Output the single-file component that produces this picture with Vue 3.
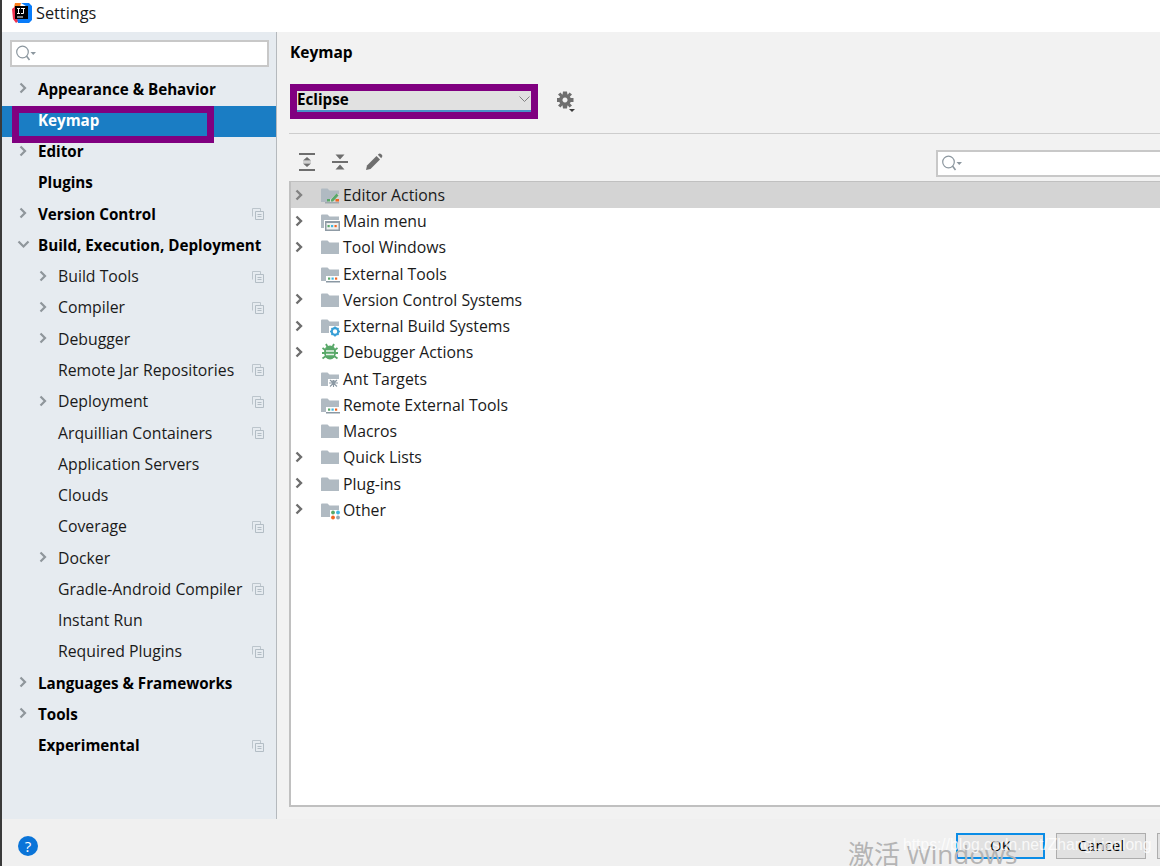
<script setup>
const side = [
  { t: 'Appearance & Behavior', b: 1, a: 1 },
  { t: 'Keymap', b: 1, sel: 1 },
  { t: 'Editor', b: 1, a: 1 },
  { t: 'Plugins', b: 1 },
  { t: 'Version Control', b: 1, a: 1, c: 1 },
  { t: 'Build, Execution, Deployment', b: 1, a: 2 },
  { t: 'Build Tools', a: 1, c: 1, sub: 1 },
  { t: 'Compiler', a: 1, c: 1, sub: 1 },
  { t: 'Debugger', a: 1, sub: 1 },
  { t: 'Remote Jar Repositories', c: 1, sub: 1 },
  { t: 'Deployment', a: 1, c: 1, sub: 1 },
  { t: 'Arquillian Containers', c: 1, sub: 1 },
  { t: 'Application Servers', sub: 1 },
  { t: 'Clouds', sub: 1 },
  { t: 'Coverage', c: 1, sub: 1 },
  { t: 'Docker', a: 1, sub: 1 },
  { t: 'Gradle-Android Compiler', c: 1, sub: 1 },
  { t: 'Instant Run', sub: 1 },
  { t: 'Required Plugins', c: 1, sub: 1 },
  { t: 'Languages & Frameworks', b: 1, a: 1 },
  { t: 'Tools', b: 1, a: 1 },
  { t: 'Experimental', b: 1, c: 1 }
]
const tree = [
  { t: 'Editor Actions', a: 1, k: 'edit', hi: 1 },
  { t: 'Main menu', a: 1, k: 'menu' },
  { t: 'Tool Windows', a: 1, k: 'plain' },
  { t: 'External Tools', k: 'ext' },
  { t: 'Version Control Systems', a: 1, k: 'plain' },
  { t: 'External Build Systems', a: 1, k: 'build' },
  { t: 'Debugger Actions', a: 1, k: 'bug' },
  { t: 'Ant Targets', k: 'ant' },
  { t: 'Remote External Tools', k: 'ext' },
  { t: 'Macros', k: 'plain' },
  { t: 'Quick Lists', a: 1, k: 'plain' },
  { t: 'Plug-ins', a: 1, k: 'plain' },
  { t: 'Other', a: 1, k: 'other' }
]
const folder = 'M0 3.500 Q0 2.500 1 2.500 H6.500 L8.500 4.500 H18 V16 H0 Z'
</script>

<template>
  <div class="root">
    <header class="title">
      <svg class="logo" width="20" height="20" viewBox="0 0 20 20">
        <path d="M3 0 H9 L8 4 L1 9 Z" fill="#fc801d" />
        <path d="M0 6 L4 3 L8 17 L4 20 L1 16 Z" fill="#f0334f" />
        <path d="M9 0 H17 L20 3 V17 L17 20 H6 L5 15 L14 3 Z" fill="#087cfa" />
        <rect x="3" y="3" width="13" height="13" fill="#000" />
        <rect x="5" y="13.500" width="6" height="1" fill="#fff" />
        <path d="M5 5 H8 V6 H7 V10 H8 V11 H5 V10 H6 V6 H5 Z M9 5 H13 V6 H12 V10 Q12 11 11 11 H9 V10 H11 V6 H9 Z" fill="#fff" />
      </svg>
      <span class="title-text">Settings</span>
    </header>
    <div class="main">
      <aside class="sidebar">
        <div class="search side-search">
          <svg width="22" height="17" viewBox="0 0 22 17" class="search-ic">
            <circle cx="6.500" cy="7" r="5.800" fill="none" stroke="#8c979f" stroke-width="1.200" />
            <path d="M10.500 11 L13.500 15" stroke="#8c979f" stroke-width="1.600" />
            <path d="M14.500 7 H20 L17.250 10 Z" fill="#8c979f" />
          </svg>
        </div>
        <nav class="nav">
          <div
            v-for="s in side"
            :key="s.t"
            class="nav-row"
            :class="{ bold: s.b, sel: s.sel, sub: s.sub }"
          >
            <svg v-if="s.a === 1" class="arrow" width="9" height="13" viewBox="0 0 9 13">
              <path d="M1.500 1.500 L6 6 L1.500 10.500" fill="none" stroke="#8f969b" stroke-width="2.200" />
            </svg>
            <svg v-if="s.a === 2" class="arrow down" width="13" height="9" viewBox="0 0 13 9">
              <path d="M1.500 1.500 L6.500 6.500 L11.500 1.500" fill="none" stroke="#8f969b" stroke-width="2.200" />
            </svg>
            <span class="nav-text">{{ s.t }}</span>
            <svg v-if="s.c" class="copy" width="12" height="12" viewBox="0 0 12 12">
              <path d="M.5 8.500 V.5 H8.500 V3" fill="none" stroke="#bcc5cc" />
              <path d="M3.500 3.500 H11.500 V11.500 H3.500 Z" fill="none" stroke="#b3bdc5" />
              <path d="M5.500 6.500 H9.500 M5.500 8.500 H9.500" stroke="#b3bdc5" />
            </svg>
          </div>
        </nav>
        <div class="mark mark-nav"></div>
      </aside>
      <section class="panel">
        <h1 class="heading">Keymap</h1>
        <div class="keymap-row">
          <div class="combo-frame">
            <div class="combo">
              <span>Eclipse</span>
              <svg width="11" height="7" viewBox="0 0 11 7">
                <path d="M.5 .5 L5.500 5.500 L10.500 .5" fill="none" stroke="#808080" />
              </svg>
            </div>
          </div>
          <svg class="gear" width="20" height="22" viewBox="0 0 20 22">
            <g fill="#6e6e6e">
              <path fill-rule="evenodd" d="M8 3 A6 6 0 1 0 8.010 3 Z M8 6.500 A2.500 2.500 0 1 1 7.990 6.500 Z" />
              <path d="M6 .5 H10 L10.500 4 H5.500 Z M6 17.500 H10 L10.500 14 H5.500 Z M-.5 7 H3 V11 H-.5 Z M13 7 H16.500 V11 H13 Z" />
              <path d="M1 3.500 L3.500 1.500 L5.500 4 L3.500 6 Z M15 3.500 L12.500 1.500 L10.500 4 L12.500 6 Z M1 14.500 L3.500 16.500 L5.500 14 L3.500 12 Z M15 14.500 L12.500 16.500 L10.500 14 L12.500 12 Z" />
            </g>
            <path d="M12 18 H18 L15 21 Z" fill="#3c3c3c" />
          </svg>
        </div>
        <div class="sep"></div>
        <div class="toolbar">
          <svg class="tool" width="16" height="18" viewBox="0 0 16 18">
            <path d="M0 1 H16 M0 17 H16" stroke="#6e6e6e" stroke-width="2" />
            <path d="M8 4 L12 7.500 H4 Z M8 14 L12 10.500 H4 Z" fill="#6e6e6e" />
            <path d="M4 9 H12" stroke="#b0b0b0" />
          </svg>
          <svg class="tool" width="16" height="18" viewBox="0 0 16 18">
            <path d="M0 9 H16" stroke="#6e6e6e" stroke-width="2" />
            <path d="M8 6.500 L3.500 1.500 H12.500 Z M8 11.500 L3.500 16.500 H12.500 Z" fill="#6e6e6e" />
          </svg>
          <svg class="tool" width="18" height="18" viewBox="0 0 18 18">
            <path d="M1 17 L2 12.500 L11.500 3 L15 6.500 L5.500 16 Z" fill="#6e6e6e" />
            <path d="M12.800 1.800 L14 .8 Q15 .2 16 1 L17 2 Q17.800 3 17 4 L16.200 5.200 Z" fill="#6e6e6e" />
          </svg>
          <div class="search tool-search">
            <svg width="22" height="17" viewBox="0 0 22 17" class="search-ic">
              <circle cx="6.500" cy="7" r="5.800" fill="none" stroke="#8c979f" stroke-width="1.200" />
              <path d="M10.500 11 L13.500 15" stroke="#8c979f" stroke-width="1.600" />
              <path d="M14.500 7 H20 L17.250 10 Z" fill="#8c979f" />
            </svg>
          </div>
        </div>
        <div class="tree">
          <div v-for="r in tree" :key="r.t" class="tree-row" :class="{ hi: r.hi }">
            <span class="tree-arrow">
              <svg v-if="r.a" width="9" height="13" viewBox="0 0 9 13">
                <path d="M1.500 1.500 L6 6 L1.500 10.500" fill="none" :stroke="r.hi ? '#828282' : '#6e6e6e'" stroke-width="2.400" />
              </svg>
            </span>
            <svg class="node" width="20" height="18" viewBox="0 0 20 18">
              <path v-if="r.k !== 'bug'" :d="folder" fill="#b0bac2" />
              <template v-if="r.k === 'edit'">
                <path d="M6 16 H19 V8 H15 Z" fill="#d4d4d4" />
                <rect x="4" y="16" width="14" height="1.500" fill="#a0a8ae" />
                <rect x="6" y="13" width="3" height="2.500" fill="#59a869" />
                <path d="M10 13.500 L15.500 7.500 L17.500 9.500 L12 15.500 H10 Z" fill="#59a869" />
                <rect x="14.500" y="13" width="3.500" height="2.500" fill="#f26522" />
              </template>
              <template v-if="r.k === 'menu'">
                <rect x="3" y="8" width="17" height="11.500" fill="#fff" />
                <rect x="4" y="9" width="15" height="10" fill="#8f9ba5" />
                <rect x="5.500" y="11" width="12" height="6.500" fill="#f0f0f0" />
                <rect x="6.500" y="13" width="2.200" height="2.200" fill="#59a869" />
                <rect x="10" y="13" width="2.200" height="2.200" fill="#40b6e0" />
                <rect x="13.500" y="13" width="2.200" height="2.200" fill="#f26522" />
              </template>
              <template v-if="r.k === 'ext'">
                <rect x="5" y="11" width="15" height="7" fill="#fff" />
                <rect x="7" y="12.500" width="2.200" height="2.200" fill="#59a869" />
                <rect x="10.500" y="12.500" width="2.200" height="2.200" fill="#40b6e0" />
                <rect x="14" y="12.500" width="2.200" height="2.200" fill="#f26522" />
                <rect x="5" y="16" width="14" height="1.500" fill="#8a98a3" />
              </template>
              <template v-if="r.k === 'build'">
                <rect x="8" y="9" width="12" height="11" fill="#fff" />
                <circle cx="14" cy="14.500" r="3.300" fill="none" stroke="#389fd6" stroke-width="2.200" />
                <path d="M14 9.500 V11.500 M14 17.500 V19.500 M9 14.500 H11 M17 14.500 H19 M10.500 11 L12 12.500 M17.500 11 L16 12.500 M10.500 18 L12 16.500 M17.500 18 L16 16.500" stroke="#389fd6" stroke-width="1.600" />
              </template>
              <template v-if="r.k === 'bug'">
                <ellipse cx="9" cy="9.500" rx="6" ry="7" fill="#59a869" />
                <path d="M1.500 5 L5 7.500 M16.500 5 L13 7.500 M1 10 H4 M17 10 H14 M1.500 15.500 L5 13 M16.500 15.500 L13 13 M5 1 L6.500 4 M13 1 L11.500 4" stroke="#59a869" stroke-width="1.800" />
                <path d="M5 8 H13 M5 11.500 H13" stroke="#e8f2ea" stroke-width="1.300" />
              </template>
              <template v-if="r.k === 'ant'">
                <rect x="7" y="9" width="13" height="10" fill="#fff" />
                <path d="M9 10 L16 16.500 M16 10 L9 16.500 M12.500 10 V17 M8 13 H17 M10 11 H15" stroke="#8a98a3" stroke-width="1.100" />
              </template>
              <template v-if="r.k === 'other'">
                <rect x="9" y="9" width="11" height="10" fill="#fff" />
                <circle cx="12" cy="11.500" r="1.900" fill="#59a869" />
                <circle cx="17" cy="11.500" r="1.900" fill="#40b6e0" />
                <circle cx="12" cy="16.500" r="1.900" fill="#f26522" />
                <circle cx="17" cy="16.500" r="1.900" fill="#9aa7b0" />
              </template>
            </svg>
            <span class="tree-text">{{ r.t }}</span>
          </div>
        </div>
      </section>
    </div>
    <footer class="footer">
      <div class="help">?</div>
      <div class="buttons">
        <div class="btn ok">OK</div>
        <div class="btn">Cancel</div>
        <div class="btn cut"></div>
      </div>
      <span class="activate">激活 Windows</span>
      <span class="url">https://blog.csdn.net/ZhangLianlong</span>
    </footer>
  </div>
</template>

<style>
html, body { margin: 0; background: #f2f2f2; }
</style>

<style scoped>
.root {
  width: 1160px;
  height: 866px;
  position: relative;
  overflow: hidden;
  display: flex;
  flex-direction: column;
  font-family: "Open Sans", "Noto Sans", "Noto Sans CJK SC", sans-serif;
  font-size: 15.8px;
  color: #000;
  background: #f2f2f2;
  border-left: 2px solid #3a3a3a;
  box-sizing: border-box;
}
.title {
  height: 32px;
  flex: none;
  background: #fff;
  display: flex;
  align-items: center;
  padding: 0 0 6px 10px;
  box-sizing: border-box;
  gap: 4px;
}
.title-text { font-size: 16.3px; color: #1a1a1a; }
.main { height: 787px; flex: none; display: flex; }
.sidebar {
  width: 275px;
  flex: none;
  position: relative;
  background: #e6ebf0;
  border-right: 1px solid #b5b9bd;
  box-sizing: border-box;
  padding-top: 8px;
}
.search {
  background: #fff;
  border: 2px solid #c8c8c8;
  box-sizing: border-box;
  display: flex;
  align-items: center;
}
.side-search { width: 259px; height: 27px; margin-left: 8px; padding-left: 4px; }
.nav { margin-top: 6px; }
.nav-row {
  height: 31.27px;
  display: flex;
  align-items: center;
  padding-left: 36px;
  position: relative;
  font-weight: 400;
  color: #1a1a1a;
}
.nav-row.sub { padding-left: 56px; }
.nav-row.bold { font-weight: 700; color: #000; font-size: 15.2px; }
.nav-row.sel {
  background: linear-gradient(transparent 1.8px, #1a7dc4 1.8px);
  box-shadow: 0 1px 0 #1a7dc4;
  color: #fff;
  box-sizing: border-box;
  z-index: 1;
}
.arrow { position: absolute; left: 17px; top: 9px; }
.arrow.down { left: 15px; top: 11px; }
.nav-row.sub .arrow { left: 37px; }
.copy { position: absolute; right: 12px; top: 10px; }
.mark-nav {
  position: absolute;
  left: 10px;
  top: 74px;
  width: 202px;
  height: 37px;
  border: 7px solid #800080;
  box-sizing: border-box;
  z-index: 2;
}
.panel { flex: 1; min-width: 0; padding: 0 0 12px 12px; display: flex; flex-direction: column; box-sizing: border-box; }
.heading { margin: 10px 0 0 1px; font-size: 15.5px; font-weight: 700; height: 21px; line-height: 21px; }
.keymap-row { display: flex; align-items: center; margin: 21px 0 0 1px; }
.combo-frame { width: 248px; height: 35px; border: 7px solid #800080; box-sizing: border-box; }
.combo {
  height: 100%;
  background: #e1e1e1;
  border-bottom: 2px solid #4a90c8;
  box-sizing: border-box;
  display: flex;
  align-items: center;
  justify-content: space-between;
  font-weight: 700;
  font-size: 15.2px;
  padding: 0 1px 3px 0;
}
.gear { margin-left: 19px; }
.sep { height: 1px; background: #cdcdcd; margin-top: 14px; }
.toolbar { height: 47px; flex: none; display: flex; align-items: center; position: relative; padding: 9px 0 0 10px; box-sizing: border-box; }
.tool { margin-right: 17px; }
.tool-search { position: absolute; left: 647px; top: 16px; width: 240px; height: 27px; padding-left: 4px; border-right: 0; }
.tree { flex: 1; background: #fff; border: 2px solid #c0c0c0; border-right: 0; border-top-width: 1px; box-sizing: border-box; }
.tree-row { height: 26.25px; display: flex; align-items: center; }
.tree-row.hi { background: #d4d4d4; height: 26px; }
.tree-arrow { width: 30px; padding-left: 4px; box-sizing: border-box; display: flex; flex: none; }
.node { flex: none; overflow: visible; }
.tree-text { margin-left: 2px; color: #1a1a1a; }
.footer { height: 47px; flex: none; background: #f0f0f0; position: relative; }
.help {
  position: absolute; left: 16px; top: 17px; width: 20px; height: 20px; border-radius: 50%;
  background: #0a74d8; color: #fff; text-align: center; line-height: 20px; font-size: 15px;
}
.buttons { position: absolute; left: 954px; top: 14px; display: flex; gap: 11px; }
.btn {
  width: 90px; height: 26px; background: #e1e1e1; border: 1px solid #adadad; box-sizing: border-box;
  display: flex; align-items: center; justify-content: center; font-size: 15px; padding-bottom: 2px;
}
.btn.ok { border: 2px solid #0a8ce6; width: 89px; }
.activate { position: absolute; left: 846px; top: 15px; font-size: 26px; color: #b4b4b4; white-space: nowrap; font-family: "Open Sans", "Noto Sans CJK SC", sans-serif; }
.url { position: absolute; left: 901px; top: 17px; font-size: 15.7px; color: rgba(255,255,255,.8); white-space: nowrap; font-family: "Liberation Sans", sans-serif; }
</style>
